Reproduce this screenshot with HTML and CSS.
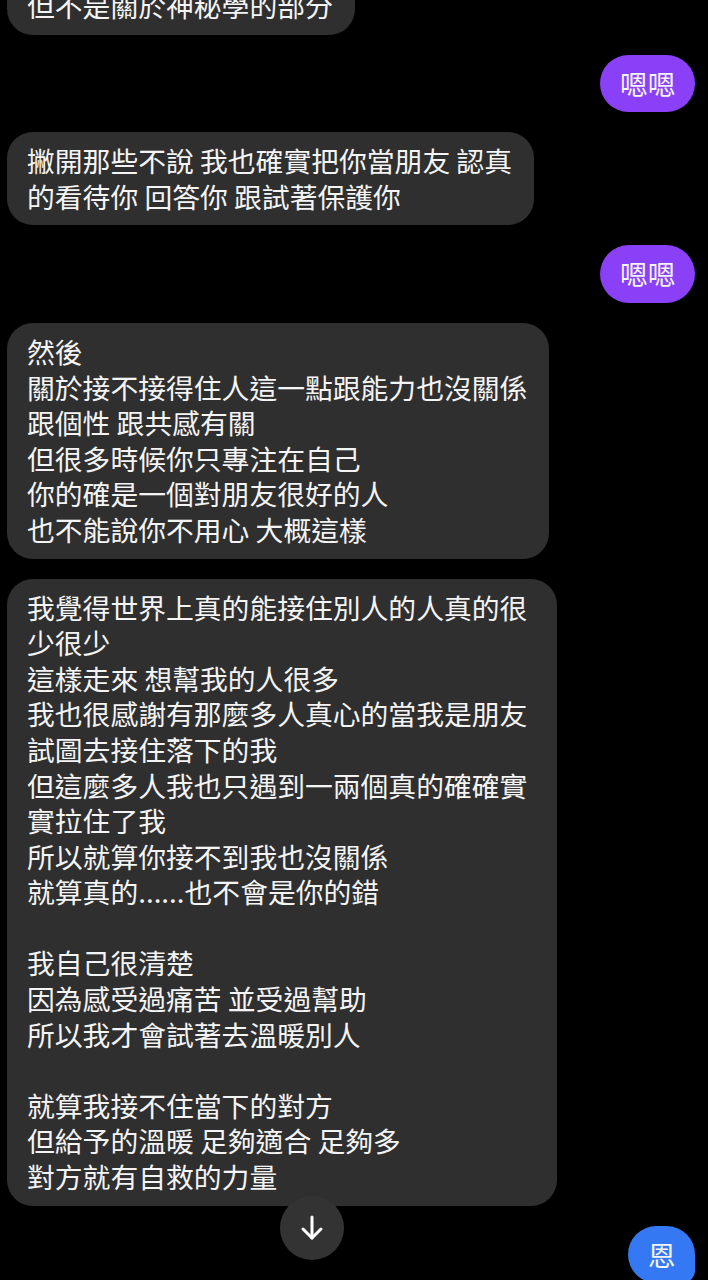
FILE: index.html
```html
<!DOCTYPE html>
<html lang="zh-Hant">
<head>
<meta charset="utf-8">
<link rel="stylesheet" href="styles.css">
</head>
<body>
<div class="chat">
  <div class="msg in first">但不是關於神秘學的部分</div>
  <div class="msg out purple">嗯嗯</div>
  <div class="msg in">撇開那些不說 我也確實把你當朋友 認真<br>的看待你 回答你 跟試著保護你</div>
  <div class="msg out purple">嗯嗯</div>
  <div class="msg in">然後<br>關於接不接得住人這一點跟能力也沒關係<br>跟個性 跟共感有關<br>但很多時候你只專注在自己<br>你的確是一個對朋友很好的人<br>也不能說你不用心 大概這樣</div>
  <div class="msg in">我覺得世界上真的能接住別人的人真的很少很少<br>這樣走來 想幫我的人很多<br>我也很感謝有那麼多人真心的當我是朋友<br>試圖去接住落下的我<br>但這麼多人我也只遇到一兩個真的確確實實拉住了我<br>所以就算你接不到我也沒關係<br>就算真的......也不會是你的錯<br><br>我自己很清楚<br>因為感受過痛苦 並受過幫助<br>所以我才會試著去溫暖別人<br><br>就算我接不住當下的對方<br>但給予的溫暖 足夠適合 足夠多<br>對方就有自救的力量</div>
  <div class="msg out blue">恩</div>
</div>
<button class="scroll-down" aria-label="scroll down">
  <svg width="28" height="28" viewBox="0 0 28 28" fill="none" stroke="#fff" stroke-width="3" stroke-linecap="round" stroke-linejoin="round">
    <path d="M14 3 V24"/>
    <path d="M5 15 L14 24 L23 15"/>
  </svg>
</button>
</body>
</html>
```

FILE: styles.css
```css
html, body {
  margin: 0;
  padding: 0;
  background: #000;
}
body {
  width: 708px;
  height: 1280px;
  overflow: hidden;
  position: relative;
  font-family: "Noto Sans CJK TC", "Noto Sans CJK SC", "Noto Sans", sans-serif;
}
.chat {
  display: flex;
  flex-direction: column;
  align-items: flex-start;
  gap: 20px;
  padding: 0 13px 0 7px;
  margin-top: -23px;
}
.msg {
  box-sizing: border-box;
  font-size: 27.8px;
  line-height: 35.6px;
  color: #f4f4f4;
  padding: 11px 22px 11px 20px;
  border-radius: 26px;
}
.in {
  background: #2f2f2f;
  max-width: 550px;
}
.out {
  align-self: flex-end;
  padding: 11px 19.5px;
  border-radius: 29px;
}
.purple {
  background: #8a40f6;
}
.blue {
  background: #3478f3;
  border-radius: 32px 32px 14px 32px;
}
.scroll-down {
  position: absolute;
  left: 280px;
  top: 1196px;
  width: 64px;
  height: 64px;
  border-radius: 50%;
  border: none;
  padding: 0;
  background: #333;
  display: flex;
  align-items: center;
  justify-content: center;
}
```
